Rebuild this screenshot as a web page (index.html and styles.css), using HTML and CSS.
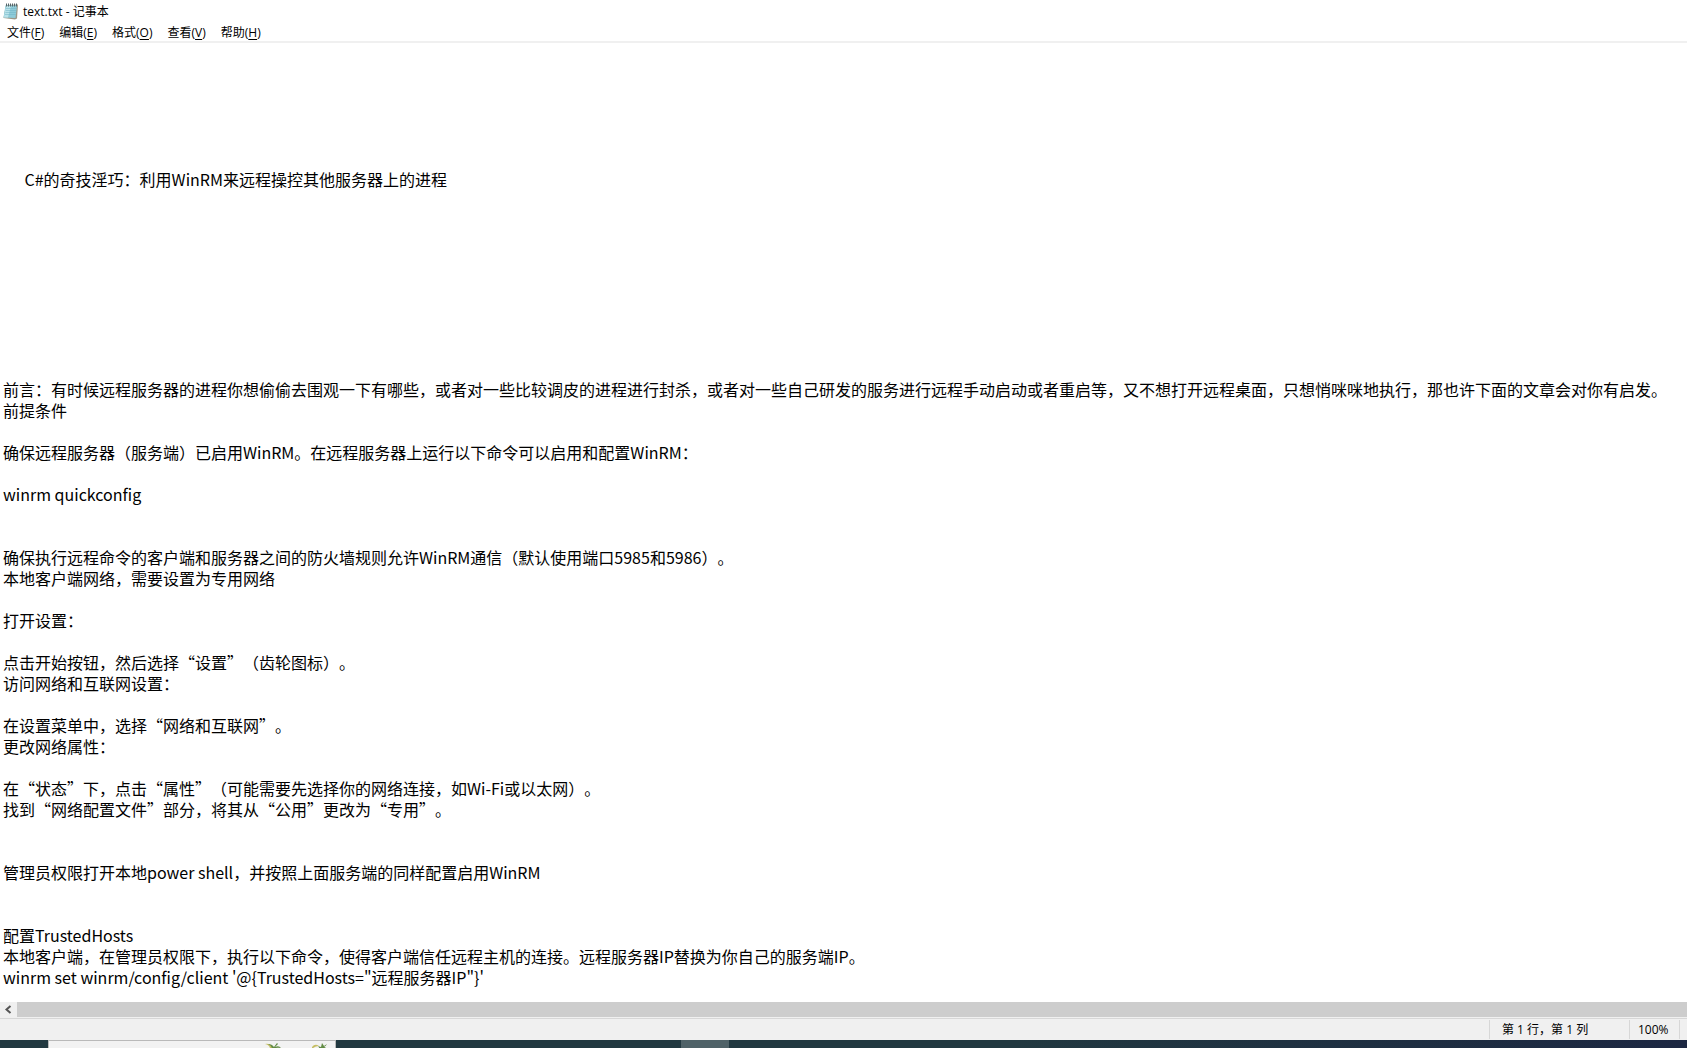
FILE: index.html
```html
<!DOCTYPE html>
<html lang="zh-CN">
<head>
<meta charset="utf-8">
<title>text.txt - 记事本</title>
<link rel="stylesheet" href="styles.css">
</head>
<body>
<header class="titlebar">
  <svg class="app-icon" width="16" height="17" viewBox="0 0 16 17" aria-hidden="true">
    <path d="M3 2L15 1.500L14 15.500L12 16.500L.5 15Z" fill="#9b9788"/>
    <path d="M2.500 2.500H14L12.500 15L.5 14.500Z" fill="#8ecbd9"/>
    <path d="M3 3H8L5 14.500H1Z" fill="#b9e2ea"/>
    <path d="M3 5.500H13.500M2.700 7.500H13.200M2.400 9.500H13M2 11.500H12.700" stroke="#6fb2c4" stroke-width=".5"/>
    <path d="M3.500 .5V3.500M5.500 .5V3.500M7.500 .5V3.500M9.500 .5V3.500M11.500 .5V3.500M13.500 .5V3.500" stroke="#54666c"/>
  </svg>
  <h1 class="title">text.txt - 记事本</h1>
</header>
<nav class="menubar" aria-label="菜单">
  <button class="menu" type="button">文件(<u>F</u>)</button>
  <button class="menu" type="button">编辑(<u>E</u>)</button>
  <button class="menu" type="button">格式(<u>O</u>)</button>
  <button class="menu" type="button">查看(<u>V</u>)</button>
  <button class="menu" type="button">帮助(<u>H</u>)</button>
</nav>
<textarea class="editor" aria-label="text.txt" spellcheck="false" wrap="off">






      C#的奇技淫巧：利用WinRM来远程操控其他服务器上的进程









前言：有时候远程服务器的进程你想偷偷去围观一下有哪些，或者对一些比较调皮的进程进行封杀，或者对一些自己研发的服务进行远程手动启动或者重启等，又不想打开远程桌面，只想悄咪咪地执行，那也许下面的文章会对你有启发。
前提条件

确保远程服务器（服务端）已启用WinRM。在远程服务器上运行以下命令可以启用和配置WinRM：

winrm quickconfig


确保执行远程命令的客户端和服务器之间的防火墙规则允许WinRM通信（默认使用端口5985和5986）。
本地客户端网络，需要设置为专用网络

打开设置：

点击开始按钮，然后选择“设置”（齿轮图标）。
访问网络和互联网设置：

在设置菜单中，选择“网络和互联网”。
更改网络属性：

在“状态”下，点击“属性”（可能需要先选择你的网络连接，如Wi-Fi或以太网）。
找到“网络配置文件”部分，将其从“公用”更改为“专用”。


管理员权限打开本地power shell，并按照上面服务端的同样配置启用WinRM


配置TrustedHosts
本地客户端，在管理员权限下，执行以下命令，使得客户端信任远程主机的连接。远程服务器IP替换为你自己的服务端IP。
winrm set winrm/config/client '@{TrustedHosts="远程服务器IP"}'</textarea>
<div class="scrollbar">
  <button class="scroll-left" type="button" aria-label="向左滚动">
    <svg width="17" height="15" viewBox="0 0 17 15" aria-hidden="true"><path d="M10.500 4L6.500 7.500L10.500 11" fill="none" stroke="#555" stroke-width="2"/></svg>
  </button>
  <div class="thumb"></div>
</div>
<footer class="statusbar">
  <span class="cell position">第 1 行，第 1 列</span>
  <span class="cell zoom">100%</span>
  <span class="cell rest"></span>
</footer>
<div class="taskbar">
  <div class="search">
    <svg class="leaves" width="64" height="6" viewBox="0 0 64 6" aria-hidden="true">
      <path d="M0 1Q5 0 7 4L8 6H5Q5 2 0 1Z" fill="#c5bd62"/>
      <path d="M3 1Q7 1 9 4L12 0L13 1L10 4Q14 2 16 5Q11 4 9 6H7Q7 3 3 1Z" fill="#628c45"/>
      <path d="M47 4Q50 0 54 3Q50 3 47 6Z" fill="#c5bd62"/>
      <path d="M53 3L56 4L57 0L59 3L62 1Q61 3 59 4Q61 4 61 6H53Q55 5 53 3Z" fill="#628c45"/>
    </svg>
  </div>
  <div class="active-task"></div>
</div>
</body>
</html>
```
FILE: styles.css
```css
* {
  box-sizing: border-box;
}

body {
  display: flex;
  flex-direction: column;
  height: 100vh;
  margin: 0;
  overflow: hidden;
  background: #fff;
  color: #000;
  font: 12px/16px "Open Sans", "Noto Sans CJK SC", sans-serif;
  text-spacing-trim: space-all;
}

button {
  padding: 0;
  border: 0;
  background: none;
  color: inherit;
  font: inherit;
}

.titlebar {
  display: flex;
  align-items: center;
  gap: 4px;
  height: 23px;
  padding-left: 3px;
}

.title {
  margin: 0;
  font-size: 12px;
  font-weight: 400;
}

.menubar {
  display: flex;
  gap: 15px;
  height: 20px;
  padding: 2px 0 0 7px;
  border-bottom: 2px solid #f0f0f0;
}

.menu u {
  text-underline-offset: 2px;
}

.editor {
  flex: 1;
  min-height: 0;
  width: 100%;
  margin: 0;
  padding: 0 3px;
  border: 0;
  outline: 0;
  resize: none;
  overflow: hidden;
  white-space: pre;
  color: #000;
  font: 16px/21px "Noto Sans CJK SC", sans-serif;
  text-spacing-trim: space-all;
}

.scrollbar {
  display: flex;
  height: 16px;
  padding-bottom: 1px;
  background: #f0f0f0;
}

.scroll-left {
  width: 17px;
  height: 15px;
}

.scroll-left svg {
  display: block;
}

.thumb {
  flex: 1;
  background: #cdcdcd;
}

.statusbar {
  display: flex;
  justify-content: flex-end;
  height: 22px;
  padding: 1px 0;
  border-top: 1px solid #d7d7d7;
  background: #f0f0f0;
}

.cell {
  border-left: 1px solid #d7d7d7;
  line-height: 19px;
}

.position {
  width: 140px;
  padding-left: 12px;
}

.zoom {
  width: 50px;
  padding-left: 8px;
}

.rest {
  width: 8px;
}

.taskbar {
  display: flex;
  height: 8px;
  padding-left: 48px;
  background: linear-gradient(90deg, #213840 60%, #1c2742);
}

.search {
  width: 288px;
  padding: 2px 0 0 216px;
  border: 1px solid #b9b9b9;
  border-bottom: 0;
  background: #f2f2f2;
}

.leaves {
  display: block;
}

.active-task {
  width: 48px;
  margin-left: 345px;
  background: #4f6268;
}
```
